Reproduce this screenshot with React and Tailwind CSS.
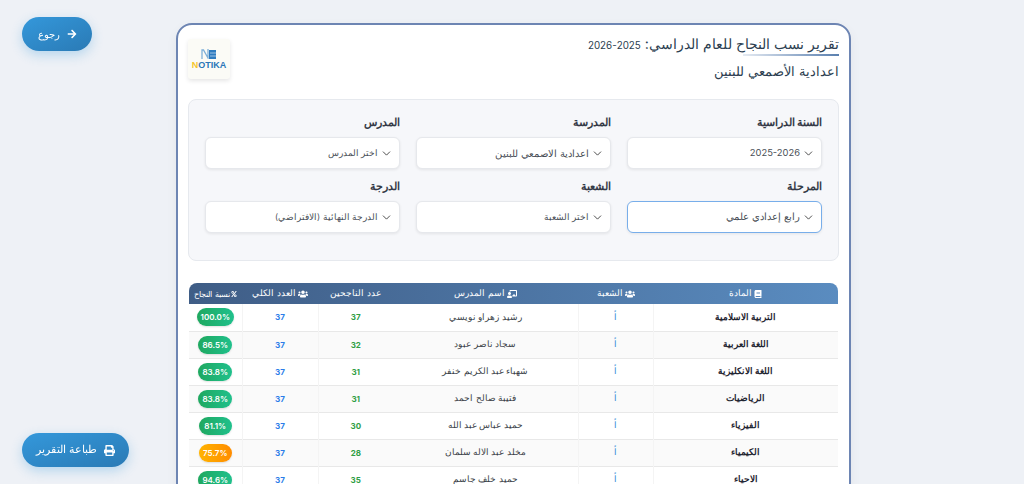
import {ChevronDown} from "lucide-react";
import {FaArrowRight, FaPrint, FaBook, FaUsers, FaChalkboardTeacher, FaPercent} from "react-icons/fa";

const filters = [
  {label: "السنة الدراسية", value: "2025-2026", size: "text-[9.4px]"},
  {label: "المدرسة", value: "اعدادية الاصمعي للبنين", size: "text-[10px]"},
  {label: "المدرس", value: "اختر المدرس", size: "text-[8.5px]"},
  {label: "المرحلة", value: "رابع إعدادي علمي", size: "text-[9.8px]", active: true},
  {label: "الشعبة", value: "اختر الشعبة", size: "text-[8.5px]"},
  {label: "الدرجة", value: "الدرجة النهائية (الافتراضي)", size: "text-[8.5px]"},
];

const rows = [
  ["التربية الاسلامية", "رشيد زهراو نويسي", 37, "100.0%", true],
  ["اللغة العربية", "سجاد ناصر عبود", 32, "86.5%", true],
  ["اللغة الانكليزية", "شهباء عبد الكريم خنفر", 31, "83.8%", true],
  ["الرياضيات", "فتيبة صالح احمد", 31, "83.8%", true],
  ["الفيزياء", "حميد عباس عبد الله", 30, "81.1%", true],
  ["الكيمياء", "مخلد عبد الاله سلمان", 28, "75.7%", false],
  ["الاحياء", "حميد خلف جاسم", 35, "94.6%", true],
];

const Filter = ({label, value, size, active}) => (
  <div>
    <div className="h-[19px] mb-[5px] text-[10.5px] leading-[19px] font-bold text-[#343a46]">{label}</div>
    <div
      className={`h-[32px] flex items-center gap-[2px] pr-[6px] rounded-[6px] bg-white text-[#4a4f57] border shadow-[0_1px_3px_rgba(0,0,0,0.08)] ${size} ${
        active ? "border-[#78aeea]" : "border-[#e6e8ec]"
      }`}
    >
      <ChevronDown size={13} strokeWidth={1.6} className="text-[#333]" />
      <span>{value}</span>
    </div>
  </div>
);

const App = () => {
  return (
    <div dir="rtl" className="relative h-[484px] overflow-hidden bg-[#eef1f6] font-['Inter',sans-serif]">
      <div dir="ltr" className="pt-[23px] pl-[176px]">
        <div dir="rtl" className="w-[675px] rounded-t-[16px] border-2 border-[#6d85b3] bg-white px-[10px] pt-[8px] pb-[20px] shadow-[0_4px_12px_rgba(0,0,0,0.05)]">
          <div className="flex justify-between h-[66px]">
            <div>
              <div className="relative w-fit text-[14.3px] leading-[21px] text-[#2c3e50]">
                تقرير نسب النجاح للعام الدراسي: <span className="text-[9.8px]">2025-2026</span>
                <div className="absolute top-[21px] right-0 w-[96px] h-[2px] bg-gradient-to-l from-[#5a7fae] to-[#e6ebf2]" />
              </div>
              <div className="mt-[5px] text-[13.4px] leading-[20px] text-[#2c3e50]">اعدادية الأصمعي للبنين</div>
            </div>
            <div dir="ltr" className="mt-[6px] w-[42px] h-[40px] flex flex-col items-center justify-center rounded-[3px] bg-[#fbfbf6] shadow-[0_2px_4px_rgba(0,0,0,0.1)]">
              <svg width="16" height="10" viewBox="0 0 16 10">
                <path d="M1 10V1h1.5L7 9V0" fill="none" stroke="#7fb0d8" strokeWidth="1.3" />
                <rect x="8" y="1" width="7" height="9" fill="#2f7cc0" />
                <path d="M9 4h6M9 7h6" stroke="#cfe2f2" strokeWidth="0.7" />
              </svg>
              <div className="mt-[1px] text-[9px] leading-[10px] font-bold font-['Liberation_Sans',sans-serif] text-[#2a77b8]">
                <span className="text-[#f6c62c]">N</span>OTIKA
              </div>
            </div>
          </div>

          <div className="h-[162px] rounded-[8px] border border-[#e6e9ee] bg-[#f6f7fa] px-[16px] pt-[13px]">
            <div className="grid grid-cols-3 gap-x-[16px] gap-y-[8px]">
              {filters.map((f) => (
                <Filter key={f.label} {...f} />
              ))}
            </div>
          </div>

          <div className="mt-[22px] mx-[1px]">
            <table className="w-full table-fixed border-collapse text-[8.7px]">
              <colgroup>
                <col className="w-[185px]" />
                <col className="w-[75px]" />
                <col className="w-[185px]" />
                <col className="w-[75px]" />
                <col className="w-[76px]" />
                <col className="w-[53px]" />
              </colgroup>
              <thead>
                <tr className="h-[21px] text-[8.5px] text-white bg-gradient-to-l from-[#5a8cc0] to-[#3f5d86] shadow-[0_1px_0_#3f5d86]">
                  <th className="font-normal rounded-tr-[8px]">
                    <span className="inline-flex align-middle items-center gap-[2px]"><FaBook size={8} />المادة</span>
                  </th>
                  <th className="font-normal">
                    <span className="inline-flex align-middle items-center gap-[2px]"><FaUsers size={10} />الشعبة</span>
                  </th>
                  <th className="font-normal">
                    <span className="inline-flex align-middle items-center gap-[2px]"><FaChalkboardTeacher size={10} />اسم المدرس</span>
                  </th>
                  <th className="font-normal">عدد الناجحين</th>
                  <th className="font-normal">
                    <span className="inline-flex align-middle items-center gap-[2px]"><FaUsers size={10} />العدد الكلي</span>
                  </th>
                  <th className="font-normal text-[8px] rounded-tl-[8px] whitespace-nowrap">
                    <span className="inline-flex align-middle items-center gap-[1px]"><FaPercent size={6} />نسبة النجاح</span>
                  </th>
                </tr>
              </thead>
              <tbody>
                {rows.map(([subject, teacher, passed, rate, good], i) => (
                  <tr key={subject} className={`h-[27px] border-b border-[#e8e8e8] ${i % 2 ? "bg-[#fafafa]" : "bg-white"}`}>
                    <td className="text-center font-bold text-[#1f2530] border-l border-[#f4f4f4]">{subject}</td>
                    <td className="text-center text-[#2e86d6] border-l border-[#f4f4f4]">أ</td>
                    <td className="text-center text-[#3a3f47]">{teacher}</td>
                    <td className="text-center text-[8px] font-bold text-[#2f9e44] border-l border-[#f4f4f4]">{passed}</td>
                    <td className="text-center text-[8px] font-bold text-[#2b7de9] border-l border-[#f4f4f4]">37</td>
                    <td className="text-center">
                      <span
                        className={`inline-block min-w-[33px] px-[4px] text-[8px] leading-[18px] rounded-full font-semibold text-white shadow-[0_1px_2px_rgba(0,0,0,0.12)] ${
                          good ? "bg-gradient-to-r from-[#1fa85f] to-[#20c08c]" : "bg-gradient-to-r from-[#ffb300] to-[#ff8c00]"
                        }`}
                      >
                        {rate}
                      </span>
                    </td>
                  </tr>
                ))}
              </tbody>
            </table>
          </div>
        </div>
      </div>

      <button className="fixed top-[17px] left-[22px] w-[70px] h-[34px] flex items-center justify-center gap-[7px] rounded-full bg-gradient-to-br from-[#3498db] to-[#2a7ab5] text-white text-[10px] shadow-[0_4px_12px_rgba(52,152,219,0.3)]">
        <FaArrowRight size={10} />
        رجوع
      </button>
      <button className="fixed top-[433px] left-[22px] w-[107px] h-[34px] flex items-center justify-center gap-[7px] rounded-full bg-gradient-to-br from-[#3498db] to-[#2a7ab5] text-white text-[10.5px] shadow-[0_4px_12px_rgba(52,152,219,0.3)]">
        <FaPrint size={11} />
        طباعة التقرير
      </button>
    </div>
  );
};

export default App;
